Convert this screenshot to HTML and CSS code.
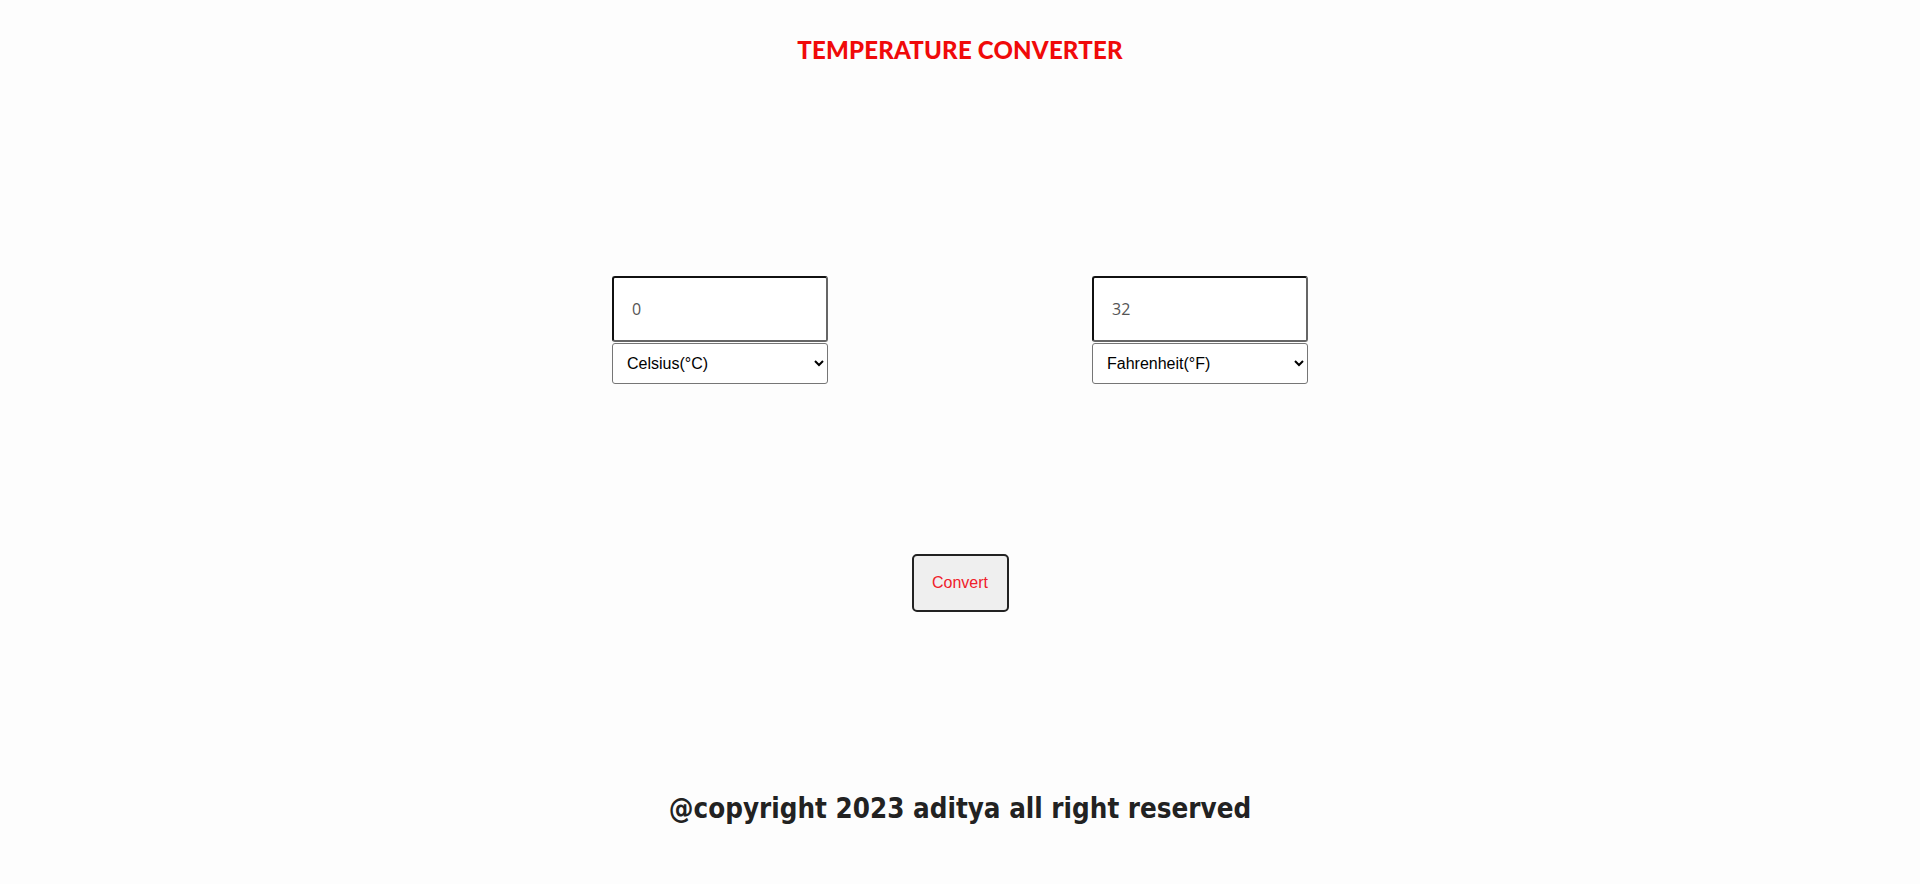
FILE: index.html
```html
<!DOCTYPE html>
<html lang="en">
<head>
<meta charset="utf-8">
<title>Temperature Converter</title>
<link rel="stylesheet" href="styles.css">
</head>
<body>
<header class="top">
  <h1 class="title">TEMPERATURE CONVERTER</h1>
</header>
<main class="main">
  <div class="row">
    <div class="group">
      <input class="field" type="text" value="0">
      <select class="unit">
        <option selected>Celsius(°C)</option>
        <option>Fahrenheit(°F)</option>
        <option>Kelvin(K)</option>
      </select>
    </div>
    <div class="group">
      <input class="field" type="text" value="32">
      <select class="unit">
        <option>Celsius(°C)</option>
        <option selected>Fahrenheit(°F)</option>
        <option>Kelvin(K)</option>
      </select>
    </div>
  </div>
  <div class="actions">
    <button class="convert" type="button">Convert</button>
  </div>
</main>
<footer class="foot">
  <p class="copy">@copyright 2023 aditya all right reserved</p>
</footer>
</body>
</html>
```
FILE: styles.css
```css
html, body {
  margin: 0;
  padding: 0;
}
body {
  background: #fdfdfd;
  width: 1920px;
  height: 884px;
  overflow: hidden;
  font-family: "Liberation Sans", Arial, sans-serif;
}
.top {
  display: flex;
  justify-content: center;
  padding-top: 36px;
}
.title {
  margin: 0;
  font-family: Lato, "Open Sans", sans-serif;
  font-weight: 900;
  font-size: 24px;
  line-height: 28px;
  color: #f00a0a;
  letter-spacing: 0.2px;
}
.main {
  display: flex;
  flex-direction: column;
  align-items: center;
}
.row {
  display: flex;
  gap: 264px;
  margin-top: 212px;
}
.group {
  display: flex;
  flex-direction: column;
  gap: 1px;
  width: 216px;
}
.field {
  box-sizing: border-box;
  width: 216px;
  height: 66px;
  margin: 0;
  padding: 0 18px;
  border: 2px solid #111;
  border-right-color: #666;
  border-bottom-color: #666;
  border-radius: 3px;
  background: #fff;
  font-family: "Open Sans", sans-serif;
  font-size: 16px;
  color: #555;
  outline: none;
}
.unit {
  box-sizing: border-box;
  width: 216px;
  height: 41px;
  margin: 0;
  padding: 0 10px;
  border: 1px solid #767676;
  border-radius: 3px;
  background: #fff;
  font-family: "Liberation Sans", Arial, sans-serif;
  font-size: 16px;
  color: #000;
}
.actions {
  display: flex;
  justify-content: center;
  margin-top: 170px;
}
.convert {
  box-sizing: border-box;
  width: 97px;
  height: 58px;
  border: 2px solid #222;
  border-radius: 5px;
  background: #efefef;
  color: #f0202a;
  font-family: "Liberation Sans", Arial, sans-serif;
  font-size: 16px;
  cursor: pointer;
}
.foot {
  display: flex;
  justify-content: center;
  margin-top: 179px;
}
.copy {
  margin: 0;
  font-family: "DejaVu Sans Condensed", "DejaVu Sans", sans-serif;
  font-weight: bold;
  font-size: 27.5px;
  line-height: 34px;
  color: #222;
}
```
